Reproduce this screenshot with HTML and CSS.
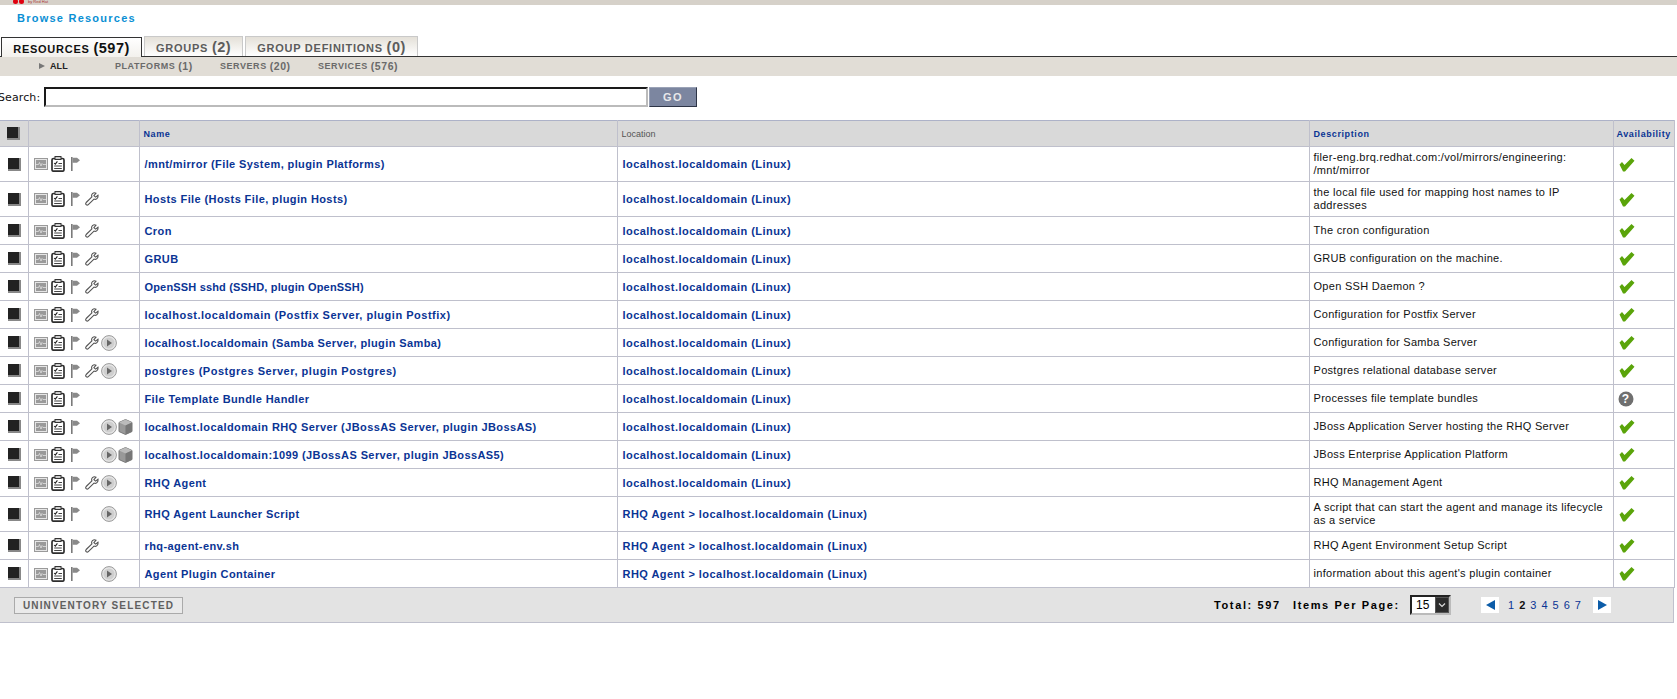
FILE: index.html
```html
<!DOCTYPE html>
<html lang="en">
<head>
<meta charset="utf-8">
<title>Browse Resources</title>
<link rel="stylesheet" href="styles.css">
</head>
<body>
<svg class="sprite" width="0" height="0" aria-hidden="true">
  <symbol id="i-mon" viewBox="0 0 14 12"><rect x=".5" y=".5" width="13" height="11" fill="#e6e6e6" stroke="#9a9a9a"/><rect x="2" y="2" width="10" height="8" fill="#9a9a9a"/><path d="M2 6.500h2.500l1-2 1.500 3.500 1-2.500 1 1h3" fill="none" stroke="#e0e0e0" stroke-width=".8"/></symbol>
  <symbol id="i-clip" viewBox="0 0 14 16"><rect x="1" y="2.500" width="12" height="12.700" rx="1.500" fill="#fff" stroke="#2e2e2e" stroke-width="1.700"/><rect x="4" y=".5" width="6" height="3" fill="#ccc" stroke="#333"/><path d="M3.200 7l1.100 1.200L6.400 5.400" fill="none" stroke="#222" stroke-width="1.100"/><path d="M7.500 7.500h3.500M3.200 10h7.600M3.200 12.500h7.600" stroke="#444"/></symbol>
  <symbol id="i-flag" viewBox="0 0 9 14"><path d="M.8 0v14" stroke="#7a7a7a" stroke-width="1.600"/><path d="M1.500.7h4.500l3 2.600-3 2.500H1.500z" fill="#8a8a8a"/></symbol>
  <symbol id="i-wrench" viewBox="0 0 14 14"><path d="M13 3.200l-2.400 1.900-1.700-1.500L11 1.200C9.300.3 7.400 1 6.800 2.600c-.3.8-.2 1.500.1 2.200L1.200 10.500c-.7.8-.6 1.600 0 2.200s1.500.6 2.100 0L9 7.100c1.900.8 4.500-.8 4-3.900z" fill="#fff" stroke="#555" stroke-width="1.100"/></symbol>
  <symbol id="i-play" viewBox="0 0 16 16"><circle cx="8" cy="8" r="7.400" fill="#e6e6e6" stroke="#999"/><circle cx="8" cy="8" r="5.600" fill="#cfcfcf"/><path d="M6 4.500l5 3.500-5 3.500z" fill="#666"/></symbol>
  <symbol id="i-box" viewBox="0 0 15 16"><path d="M7.500.5l6.500 3v9l-6.500 3-6.500-3v-9z" fill="#999" stroke="#777"/><path d="M1 3.500l6.500 3 6.500-3-6.500-3z" fill="#bbb"/><path d="M7.500 6.500v9l6.500-3v-9z" fill="#777"/></symbol>
  <symbol id="i-check" viewBox="0 0 16 15"><path d="M.5 7.500L3 5l2.500 3L12.500 1l3 2.800L6 14.500H4z" fill="#5aa40a"/></symbol>
  <symbol id="i-help" viewBox="0 0 16 16"><circle cx="8" cy="8" r="7.500" fill="#6f6f6f"/></symbol>
  <symbol id="i-chev" viewBox="0 0 8 6"><path d="M1 1.500l3 3 3-3" fill="none" stroke="#ddd" stroke-width="1.200"/></symbol>
</svg>

<header class="topbar"><span class="logo"><i class="dot"></i><i class="dot"></i><span class="logo-text">by Red Hat</span></span></header>
<h1 class="title">Browse Resources</h1>

<nav class="tabs">
  <a class="tab tab-on">RESOURCES <b>(597)</b></a>
  <a class="tab tab-groups">GROUPS <b>(2)</b></a>
  <a class="tab tab-defs">GROUP DEFINITIONS <b>(0)</b></a>
</nav>
<nav class="subnav">
  <a class="sub sub-all"><i class="tri"></i>ALL</a>
  <a class="sub sub-pl">PLATFORMS <b>(1)</b></a>
  <a class="sub sub-sv">SERVERS <b>(20)</b></a>
  <a class="sub">SERVICES <b>(576)</b></a>
</nav>

<form class="search">
  <label class="search-label">Search:</label>
  <span class="search-input"></span>
  <span class="go">GO</span>
</form>

<table class="grid">
  <colgroup><col class="c1"><col class="c2"><col class="c3"><col class="c4"><col class="c5"><col class="c6"></colgroup>
  <thead>
    <tr><th class="cb"><span class="check check-h"></span></th><th></th><th>Name</th><th class="plain">Location</th><th>Description</th><th class="av">Availability</th></tr>
  </thead>
  <tbody>
    <tr class="tall"><td class="cb"><span class="check"></span></td><td><div class="ic"><svg class="mon"><use href="#i-mon"/></svg><svg class="clip"><use href="#i-clip"/></svg><svg class="flag"><use href="#i-flag"/></svg></div></td><td class="n">/mnt/mirror (File System, plugin Platforms)</td><td class="n loc">localhost.localdomain (Linux)</td><td class="d">filer-eng.brq.redhat.com:/vol/mirrors/engineering: /mnt/mirror</td><td><svg class="ok"><use href="#i-check"/></svg></td></tr>
    <tr class="tall"><td class="cb"><span class="check"></span></td><td><div class="ic"><svg class="mon"><use href="#i-mon"/></svg><svg class="clip"><use href="#i-clip"/></svg><svg class="flag"><use href="#i-flag"/></svg><svg class="wr"><use href="#i-wrench"/></svg></div></td><td class="n">Hosts File (Hosts File, plugin Hosts)</td><td class="n loc">localhost.localdomain (Linux)</td><td class="d">the local file used for mapping host names to IP addresses</td><td><svg class="ok"><use href="#i-check"/></svg></td></tr>
    <tr><td class="cb"><span class="check"></span></td><td><div class="ic"><svg class="mon"><use href="#i-mon"/></svg><svg class="clip"><use href="#i-clip"/></svg><svg class="flag"><use href="#i-flag"/></svg><svg class="wr"><use href="#i-wrench"/></svg></div></td><td class="n">Cron</td><td class="n loc">localhost.localdomain (Linux)</td><td class="d">The cron configuration</td><td><svg class="ok"><use href="#i-check"/></svg></td></tr>
    <tr><td class="cb"><span class="check"></span></td><td><div class="ic"><svg class="mon"><use href="#i-mon"/></svg><svg class="clip"><use href="#i-clip"/></svg><svg class="flag"><use href="#i-flag"/></svg><svg class="wr"><use href="#i-wrench"/></svg></div></td><td class="n">GRUB</td><td class="n loc">localhost.localdomain (Linux)</td><td class="d">GRUB configuration on the machine.</td><td><svg class="ok"><use href="#i-check"/></svg></td></tr>
    <tr><td class="cb"><span class="check"></span></td><td><div class="ic"><svg class="mon"><use href="#i-mon"/></svg><svg class="clip"><use href="#i-clip"/></svg><svg class="flag"><use href="#i-flag"/></svg><svg class="wr"><use href="#i-wrench"/></svg></div></td><td class="n tight">OpenSSH sshd (SSHD, plugin OpenSSH)</td><td class="n loc">localhost.localdomain (Linux)</td><td class="d">Open SSH Daemon ?</td><td><svg class="ok"><use href="#i-check"/></svg></td></tr>
    <tr><td class="cb"><span class="check"></span></td><td><div class="ic"><svg class="mon"><use href="#i-mon"/></svg><svg class="clip"><use href="#i-clip"/></svg><svg class="flag"><use href="#i-flag"/></svg><svg class="wr"><use href="#i-wrench"/></svg></div></td><td class="n wide">localhost.localdomain (Postfix Server, plugin Postfix)</td><td class="n loc">localhost.localdomain (Linux)</td><td class="d">Configuration for Postfix Server</td><td><svg class="ok"><use href="#i-check"/></svg></td></tr>
    <tr><td class="cb"><span class="check"></span></td><td><div class="ic"><svg class="mon"><use href="#i-mon"/></svg><svg class="clip"><use href="#i-clip"/></svg><svg class="flag"><use href="#i-flag"/></svg><svg class="wr"><use href="#i-wrench"/></svg><svg class="pl"><use href="#i-play"/></svg></div></td><td class="n">localhost.localdomain (Samba Server, plugin Samba)</td><td class="n loc">localhost.localdomain (Linux)</td><td class="d">Configuration for Samba Server</td><td><svg class="ok"><use href="#i-check"/></svg></td></tr>
    <tr><td class="cb"><span class="check"></span></td><td><div class="ic"><svg class="mon"><use href="#i-mon"/></svg><svg class="clip"><use href="#i-clip"/></svg><svg class="flag"><use href="#i-flag"/></svg><svg class="wr"><use href="#i-wrench"/></svg><svg class="pl"><use href="#i-play"/></svg></div></td><td class="n wide">postgres (Postgres Server, plugin Postgres)</td><td class="n loc">localhost.localdomain (Linux)</td><td class="d">Postgres relational database server</td><td><svg class="ok"><use href="#i-check"/></svg></td></tr>
    <tr><td class="cb"><span class="check"></span></td><td><div class="ic"><svg class="mon"><use href="#i-mon"/></svg><svg class="clip"><use href="#i-clip"/></svg><svg class="flag"><use href="#i-flag"/></svg></div></td><td class="n">File Template Bundle Handler</td><td class="n loc">localhost.localdomain (Linux)</td><td class="d">Processes file template bundles</td><td><span class="unk"><svg class="ok"><use href="#i-help"/></svg><b>?</b></span></td></tr>
    <tr><td class="cb"><span class="check"></span></td><td><div class="ic"><svg class="mon"><use href="#i-mon"/></svg><svg class="clip"><use href="#i-clip"/></svg><svg class="flag"><use href="#i-flag"/></svg><span class="wr"></span><svg class="pl"><use href="#i-play"/></svg><svg class="bx"><use href="#i-box"/></svg></div></td><td class="n">localhost.localdomain RHQ Server (JBossAS Server, plugin JBossAS)</td><td class="n loc">localhost.localdomain (Linux)</td><td class="d">JBoss Application Server hosting the RHQ Server</td><td><svg class="ok"><use href="#i-check"/></svg></td></tr>
    <tr><td class="cb"><span class="check"></span></td><td><div class="ic"><svg class="mon"><use href="#i-mon"/></svg><svg class="clip"><use href="#i-clip"/></svg><svg class="flag"><use href="#i-flag"/></svg><span class="wr"></span><svg class="pl"><use href="#i-play"/></svg><svg class="bx"><use href="#i-box"/></svg></div></td><td class="n">localhost.localdomain:1099 (JBossAS Server, plugin JBossAS5)</td><td class="n loc">localhost.localdomain (Linux)</td><td class="d">JBoss Enterprise Application Platform</td><td><svg class="ok"><use href="#i-check"/></svg></td></tr>
    <tr><td class="cb"><span class="check"></span></td><td><div class="ic"><svg class="mon"><use href="#i-mon"/></svg><svg class="clip"><use href="#i-clip"/></svg><svg class="flag"><use href="#i-flag"/></svg><svg class="wr"><use href="#i-wrench"/></svg><svg class="pl"><use href="#i-play"/></svg></div></td><td class="n">RHQ Agent</td><td class="n loc">localhost.localdomain (Linux)</td><td class="d">RHQ Management Agent</td><td><svg class="ok"><use href="#i-check"/></svg></td></tr>
    <tr class="tall"><td class="cb"><span class="check"></span></td><td><div class="ic"><svg class="mon"><use href="#i-mon"/></svg><svg class="clip"><use href="#i-clip"/></svg><svg class="flag"><use href="#i-flag"/></svg><span class="wr"></span><svg class="pl"><use href="#i-play"/></svg></div></td><td class="n">RHQ Agent Launcher Script</td><td class="n loc">RHQ Agent &gt; localhost.localdomain (Linux)</td><td class="d">A script that can start the agent and manage its lifecycle as a service</td><td><svg class="ok"><use href="#i-check"/></svg></td></tr>
    <tr><td class="cb"><span class="check"></span></td><td><div class="ic"><svg class="mon"><use href="#i-mon"/></svg><svg class="clip"><use href="#i-clip"/></svg><svg class="flag"><use href="#i-flag"/></svg><svg class="wr"><use href="#i-wrench"/></svg></div></td><td class="n">rhq-agent-env.sh</td><td class="n loc">RHQ Agent &gt; localhost.localdomain (Linux)</td><td class="d">RHQ Agent Environment Setup Script</td><td><svg class="ok"><use href="#i-check"/></svg></td></tr>
    <tr><td class="cb"><span class="check"></span></td><td><div class="ic"><svg class="mon"><use href="#i-mon"/></svg><svg class="clip"><use href="#i-clip"/></svg><svg class="flag"><use href="#i-flag"/></svg><span class="wr"></span><svg class="pl"><use href="#i-play"/></svg></div></td><td class="n">Agent Plugin Container</td><td class="n loc">RHQ Agent &gt; localhost.localdomain (Linux)</td><td class="d">information about this agent's plugin container</td><td><svg class="ok"><use href="#i-check"/></svg></td></tr>
  </tbody>
</table>

<footer class="foot">
  <span class="uninv">UNINVENTORY SELECTED</span>
  <span class="total">Total: 597</span>
  <span class="ipp">Items Per Page:</span>
  <span class="sel"><span class="sel-val">15</span><span class="sel-btn"><svg class="chev"><use href="#i-chev"/></svg></span></span>
  <span class="nav nav-prev"><i></i></span>
  <span class="pages"><a>1</a><b>2</b><a>3</a><a>4</a><a>5</a><a>6</a><a>7</a></span>
  <span class="nav nav-next"><i></i></span>
</footer>
</body>
</html>
```
FILE: styles.css
```css
* { box-sizing: border-box; }
html, body { margin: 0; padding: 0; }
body { width: 1677px; height: 699px; overflow: hidden; background: #fff; font-family: "Liberation Sans", Arial, sans-serif; font-size: 11px; color: #000; }
.sprite { position: absolute; }
svg { display: block; flex: none; }

.topbar { height: 5px; background: #d6d1c9; overflow: hidden; padding-left: 13px; }
.logo { display: flex; align-items: center; height: 2px; gap: 1px; }
.dot { width: 5px; height: 5px; border-radius: 50%; background: #e0000f; }
.logo-text { font-size: 4px; color: #a33; margin-left: 3px; line-height: 3px; }

.title { margin: 0; padding: 7px 0 0 17px; height: 31px; font-size: 11px; line-height: 13px; font-weight: bold; letter-spacing: 1.240px; color: #0a8fd4; }

.tabs { display: flex; align-items: flex-end; height: 21px; padding-left: 1px; gap: 2px; border-bottom: 1px solid #333; }
.tab { display: block; height: 20px; line-height: 21px; text-align: center; font-size: 11px; font-weight: bold; letter-spacing: .75px; color: #5c5c5c; border: 1px solid #c9c9c9; border-bottom: 0; background: linear-gradient(#e4e0d8, #fff); }
.tab b { font-size: 14.500px; letter-spacing: .5px; }
.tab-on { position: relative; width: 141px; height: 20px; margin-bottom: -1px; line-height: 20px; color: #111; background: linear-gradient(#fff, #f3f1ed); border: 1px solid #333; border-bottom: 0; }
.tab-groups { width: 99px; }
.tab-defs { width: 173px; }

.subnav { display: flex; height: 19px; padding-bottom: 1px; background: #e1ddd6; align-items: center; }
.sub { font-size: 9px; font-weight: bold; letter-spacing: .55px; color: #6a6a6a; display: flex; align-items: center; white-space: pre; }
.sub b { font-size: 10.500px; }
.sub-all { width: 115px; padding-left: 39px; color: #222; letter-spacing: .1px; gap: 5px; }
.sub-pl { width: 105px; }
.sub-sv { width: 98px; }
.tri { width: 0; height: 0; border-left: 6px solid #777; border-top: 3px solid transparent; border-bottom: 3px solid transparent; }

.search { display: flex; align-items: center; height: 20px; margin: 11px 0 13px -2px; }
.search-label { width: 46px; font-family: "DejaVu Sans", sans-serif; font-size: 11px; letter-spacing: .1px; color: #111; }
.search-input { width: 604px; height: 20px; background: #fff; border: 2px solid #bbb; border-top-color: #1a1a1a; border-left-color: #1a1a1a; }
.go { width: 48px; height: 20px; margin-left: 1px; background: #7c86a0; border: 1px solid #9aa2b6; border-right-color: #2d3446; border-bottom-color: #2d3446; color: #e8e8ea; font-size: 11px; font-weight: bold; letter-spacing: 1.500px; line-height: 18px; text-align: center; }

.grid { width: 1674px; table-layout: fixed; border-collapse: collapse; border: 1px solid #bbbdcb; border-left: 0; }
.c1 { width: 28px; } .c2 { width: 111px; } .c3 { width: 478px; } .c4 { width: 692px; } .c5 { width: 304px; } .c6 { width: 61px; }
th, td { border: 1px solid #bfc0cc; padding: 0 0 0 4px; text-align: left; vertical-align: middle; }
th:first-child, td:first-child { border-left: 0; }
thead tr { height: 26px; background: #d9d9d9; }
th { font-size: 9px; font-weight: bold; letter-spacing: .6px; color: #0a3494; border-top: 1px solid #adb2c8; border-bottom: 0; }
th.plain { font-weight: normal; color: #555; letter-spacing: 0; }
th.av { padding-left: 3px; }
tbody tr { height: 28px; }
tbody tr.tall { height: 35px; }
td.n { font-weight: bold; letter-spacing: .4px; color: #0a3494; white-space: nowrap; padding-left: 5px; }
td.loc { letter-spacing: .46px; }
td.tight { letter-spacing: .17px; }
td.wide { letter-spacing: .52px; }
td.d { line-height: 13px; letter-spacing: .3px; color: #111; padding-right: 4px; }

th.cb, td.cb { padding: 0; }
.check { display: block; width: 13px; height: 13px; margin-left: 8px; background: #222; box-shadow: inset -2px -2px 0 #888; }
.check-h { margin-left: 7px; }

.ic { display: flex; align-items: center; height: 17px; padding-left: 1px; }
.mon { width: 14px; height: 12px; margin-right: 3px; }
.clip { width: 14px; height: 16px; margin-right: 6px; }
.flag { width: 9px; height: 14px; margin-right: 5px; }
.wr { width: 14px; height: 14px; margin-right: 2px; flex: none; }
.pl { width: 16px; height: 16px; margin-right: 1px; }
.bx { width: 15px; height: 16px; }
.ok { width: 16px; height: 15px; margin-left: 1px; }
.unk { position: relative; display: block; width: 16px; height: 16px; }
.unk .ok { width: 16px; height: 16px; margin-left: 0; }
.unk b { position: absolute; left: 0; top: 0; width: 16px; text-align: center; font-size: 12px; line-height: 16px; color: #fff; }

.foot { display: flex; align-items: center; width: 1674px; height: 36px; margin-top: -1px; background: #e3e3e3; border: 1px solid #bfc0cc; border-left: 0; padding-left: 14px; font-weight: bold; letter-spacing: 1.620px; }
.uninv { width: 169px; height: 17px; line-height: 15px; text-align: center; border: 1px solid #aaa; background: #eaeaea; color: #606060; font-size: 10px; letter-spacing: 1.150px; }
.total { margin-left: 1031px; width: 79px; font-size: 11px; }
.ipp { width: 117px; font-size: 11px; }
.sel { display: flex; width: 41px; height: 20px; border: 2px solid #bbb; border-top-color: #222; border-left-color: #222; background: #fff; font-weight: normal; font-size: 12px; letter-spacing: .1px; line-height: 16px; }
.sel-val { width: 23px; padding-left: 4px; }
.sel-btn { flex: 1; background: #2c2c2c; display: flex; justify-content: center; align-items: center; box-shadow: inset 0 0 0 1px #555; }
.chev { width: 8px; height: 6px; }
.nav { display: flex; align-items: center; justify-content: center; width: 18px; height: 16px; background: #fff; }
.nav-prev { margin-left: 30px; }
.nav-next { margin-left: 12px; }
.nav-prev i { width: 0; height: 0; border-right: 9px solid #0c5ca8; border-top: 5px solid transparent; border-bottom: 5px solid transparent; }
.nav-next i { width: 0; height: 0; border-left: 9px solid #0c5ca8; border-top: 5px solid transparent; border-bottom: 5px solid transparent; }
.pages { display: flex; margin-left: 9px; width: 73px; gap: 5px; font-size: 11px; letter-spacing: 0; }
.pages a { font-weight: normal; color: #0a3494; }
.pages b { color: #111; }
```
